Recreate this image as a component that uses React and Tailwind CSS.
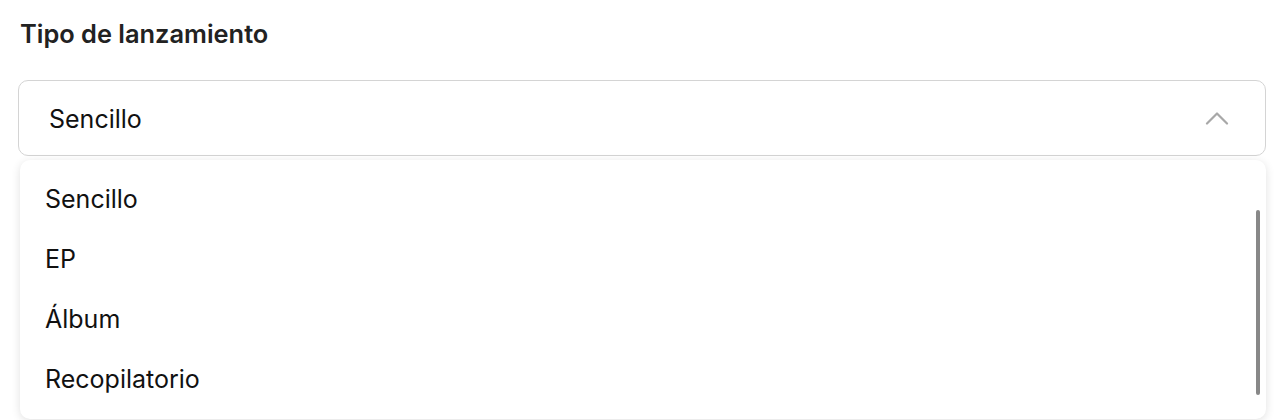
import React from 'react';

const options = ['Sencillo', 'EP', 'Álbum', 'Recopilatorio'];

const App = () => {
    return (
        <div className="bg-white h-[420px] overflow-hidden pl-[18px] pr-[16px] pt-[18px] text-[#111]" style={{ fontFamily: 'Inter, "Noto Sans", sans-serif' }}>
            {/* Label */}
            <h2 className="text-[25.4px] font-semibold text-[#222] leading-[32px] pl-[2px]">Tipo de lanzamiento</h2>

            {/* Select trigger */}
            <div className="mt-[30px] h-[76px] flex items-center justify-between border border-[#d4d4d4] rounded-[10px] pl-[30px] pr-[36px]">
                <span className="text-[25px] mt-[3px]">Sencillo</span>
                <svg width="24" height="14" viewBox="0 0 24 14">
                    <polyline points="2,12.5 12,2.5 22,12.5" fill="none" stroke="#a8a8a8" strokeWidth="2.2" strokeLinecap="round" strokeLinejoin="round" />
                </svg>
            </div>

            {/* Dropdown list */}
            <div className="mt-[4px] ml-[2px] h-[259px] bg-white rounded-[10px] shadow-[0_2px_10px_rgba(0,0,0,0.12)] flex">
                <ul className="flex-1 pt-[10px]">
                    {options.map((opt) => (
                        <li key={opt} className="h-[60px] flex items-center pl-[25px] text-[25px]">
                            {opt}
                        </li>
                    ))}
                </ul>
                <div className="w-[12px] flex justify-center pt-[50px] pb-[24px] mr-[2px]">
                    <div className="w-[4px] h-full bg-[#888] rounded-full" />
                </div>
            </div>
        </div>
    );
};

export default App;
